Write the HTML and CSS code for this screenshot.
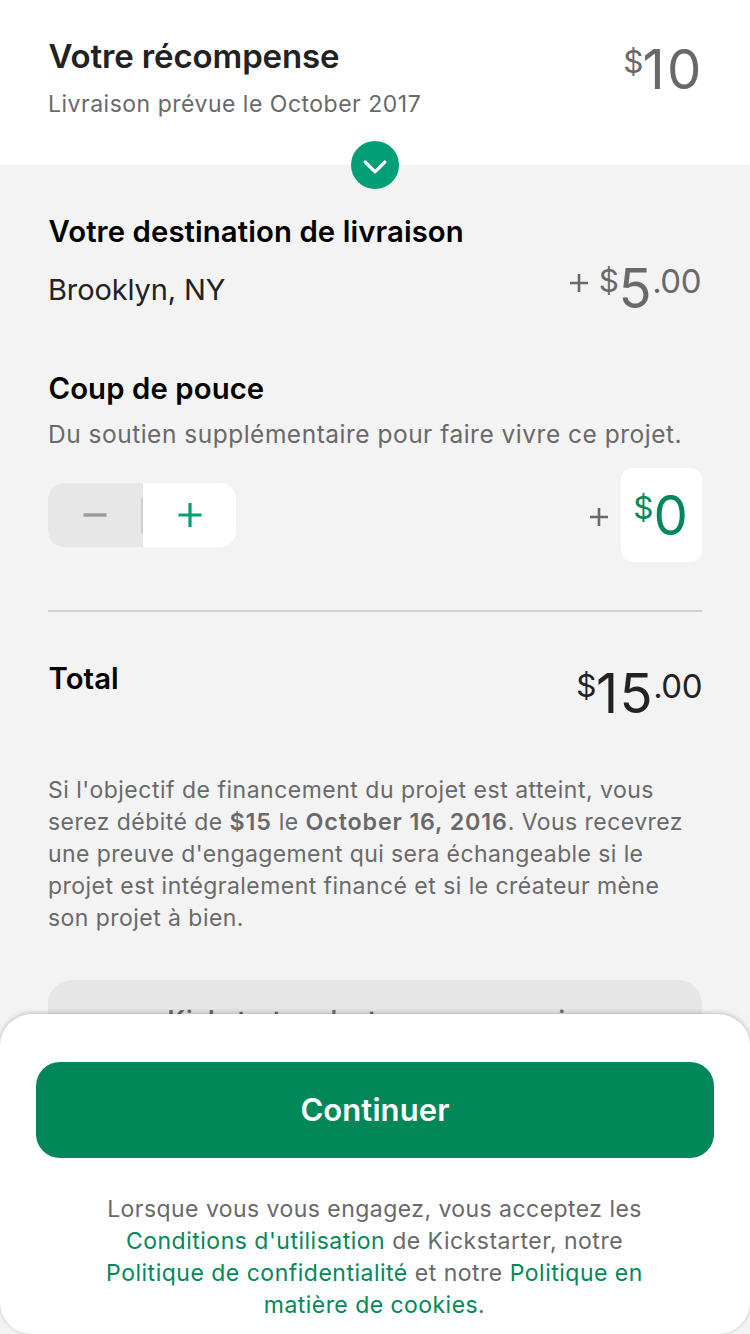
FILE: index.html
```html
<!DOCTYPE html>
<html lang="fr">
<head>
<meta charset="utf-8">
<title>Votre engagement</title>
<link rel="stylesheet" href="styles.css">
</head>
<body>
<main class="screen">
  <header class="reward">
    <div>
      <h1 class="reward-title">Votre récompense</h1>
      <p class="reward-date">Livraison prévue le October 2017</p>
    </div>
    <div class="price price-reward"><span class="cur">$</span><span class="amt two">10</span></div>
    <button class="toggle" aria-label="Afficher"><svg width="48" height="48" viewBox="0 0 48 48"><path d="M14.2 21 L24 30.8 L33.8 21" fill="none" stroke="#fff" stroke-width="3.2" stroke-linecap="round" stroke-linejoin="round"/></svg></button>
  </header>
  <section class="row shipping">
    <div>
      <h2 class="label">Votre destination de livraison</h2>
      <p class="place">Brooklyn, NY</p>
    </div>
    <div class="price price-shipping"><svg class="sum-plus" width="18" height="18" viewBox="0 0 18 18"><path d="M0 9H18M9 0V18" stroke="#696969" stroke-width="2.6"/></svg><span class="cur">$</span><span class="amt">5</span><span class="cents">.00</span></div>
  </section>
  <section class="bonus">
    <h2 class="label">Coup de pouce</h2>
    <p class="hint">Du soutien supplémentaire pour faire vivre ce projet.</p>
    <div class="row bonus-row">
      <div class="stepper">
        <button class="step minus" aria-label="Moins"><svg width="24" height="24" viewBox="0 0 24 24"><path d="M.5 12H23.5" stroke="#979b9a" stroke-width="3.4"/></svg></button>
        <button class="step plus" aria-label="Plus"><svg width="24" height="24" viewBox="0 0 24 24"><path d="M.5 12H23.5M12 0V24" stroke="#029f76" stroke-width="3.2"/></svg></button>
      </div>
      <div class="bonus-amount">
        <svg class="bonus-plus" width="18" height="18" viewBox="0 0 18 18"><path d="M0 9H18M9 0V18" stroke="#696969" stroke-width="2.6"/></svg>
        <div class="field price"><span class="cur">$</span><span class="amt">0</span></div>
      </div>
    </div>
  </section>
  <section class="row total">
    <h2 class="label">Total</h2>
    <div class="price price-total"><span class="cur">$</span><span class="amt two">15</span><span class="cents">.00</span></div>
  </section>
  <p class="terms"><span class="line">Si l'objectif de financement du projet est atteint, vous</span><span class="line snug">serez débité de <b>$15</b> le <b>October 16, 2016</b>. Vous recevrez</span><span class="line tight">une preuve d'engagement qui sera échangeable si le</span><span class="line snug">projet est intégralement financé et si le créateur mène</span><span class="line snug">son projet à bien.</span></p>
  <div class="notice">Kickstarter n'est pas un magasin</div>
  <footer class="sheet">
    <button class="continue">Continuer</button>
    <p class="legal"><span class="line snug">Lorsque vous vous engagez, vous acceptez les</span><span class="line">
      <a>Conditions d'utilisation</a> de Kickstarter, notre</span><span class="line"><a>Politique de confidentialité</a> et notre <a>Politique en</a></span><span class="line snug"><a>matière de cookies</a>.</span></p>
  </footer>
</main>
</body>
</html>
```
FILE: styles.css
```css
* { box-sizing: border-box; }
body, h1, h2, p { margin: 0; }
button { border: 0; padding: 0; font: inherit; }
svg { display: block; }
body { background: #f3f3f3; font-family: Inter, "Liberation Sans", sans-serif; color: #222; }
.screen { position: relative; width: 750px; height: 1334px; overflow: hidden; }
.reward { position: relative; display: flex; justify-content: space-between; height: 165px; padding: 36px 48px 0 48px; background: #fff; }
.reward-title { font-size: 33px; line-height: 40px; font-weight: 600; letter-spacing: -.12px; padding-left: .5px; }
.reward-date { margin-top: 12px; font-size: 23px; line-height: 32px; color: #696969; letter-spacing: .5px; }
.toggle { position: absolute; left: 351px; top: 141px; width: 48px; height: 48px; border-radius: 50%; background: #029f76; }
.row { display: flex; justify-content: space-between; }
.label { font-size: 29.3px; line-height: 36px; font-weight: 600; color: #000; letter-spacing: .1px; padding-left: .5px; }
.shipping { padding: 49px 49px 0 48px; height: 206px; }
.place { margin-top: 22px; font-size: 29px; line-height: 36px; letter-spacing: -.13px; }
.price { display: flex; align-items: flex-start; color: #696969; line-height: 40px; }
.cur { font-size: 31.5px; }
.cents { font-size: 33px; letter-spacing: -.5px; margin-left: .5px; }
.amt { font-size: 54.5px; padding-top: 7px; }
.two { letter-spacing: 1.5px; margin-left: -.5px; }
.price-total .two { margin-right: -1.5px; }
.price-reward { padding-top: 6px; }
.price-reward .two { letter-spacing: 2.5px; margin: 0 -2px 0 -1px; }
.price-shipping { padding-top: 47px; }
.price-shipping .cur { margin-right: -.5px; }
.sum-plus { margin: 13px 11px 0 0; }
.bonus { margin: 0 48px; border-bottom: 2px solid #d0d0d0; height: 241px; }
.hint { margin-top: 11px; font-size: 24.5px; line-height: 32px; color: #696969; letter-spacing: .5px; }
.bonus-row { margin-top: 18px; align-items: center; }
.stepper { display: flex; width: 188px; height: 64px; border-radius: 16px; overflow: hidden; background: #fff; }
.step { display: flex; align-items: center; justify-content: center; height: 64px; }
.minus { width: 95px; padding-right: 2px; background: linear-gradient(#cfcfcf, #cfcfcf) right center / 2px 36px no-repeat #e7e7e7; }
.plus { width: 93px; background: #fff; }
.bonus-amount { display: flex; align-items: center; }
.bonus-plus { margin: 4px 13px 0 0; }
.field { width: 81px; height: 94px; padding: 20px 2px 0 0; justify-content: center; border-radius: 12px; background: #fff; color: #028858; }
.total { padding: 49px 48px 0; height: 162px; }
.price-total { padding-top: 5px; color: #222; }
.terms { padding: 0 48px; font-size: 23px; line-height: 32px; letter-spacing: .5px; color: #696969; }
.terms b { font-weight: 600; font-size: 23.3px; letter-spacing: .85px; }
.notice { margin: 46px 48px 0; height: 120px; padding: 24px 1px 0 0; border-radius: 24px; background: #e6e6e6; text-align: center; font-size: 25.3px; line-height: 32px; font-weight: 600; letter-spacing: .42px; color: #696969; }
.sheet { position: absolute; left: 0; top: 1014px; width: 750px; height: 320px; padding: 48px 36px 0; border-radius: 32px; background: #fff; box-shadow: 0 -1px 5px rgba(0,0,0,.22); }
.continue { width: 678px; height: 96px; padding-bottom: 2px; border-radius: 24px; background: #028858; color: #fff; font-size: 31px; font-weight: 600; letter-spacing: .1px; }
.legal { margin-top: 35px; padding-right: 1px; font-size: 23px; line-height: 32px; letter-spacing: .5px; color: #696969; text-align: center; }
.line { display: block; white-space: nowrap; }
.tight { letter-spacing: .4px; }
.snug { letter-spacing: .45px; }
.legal a { color: #028858; }
```
